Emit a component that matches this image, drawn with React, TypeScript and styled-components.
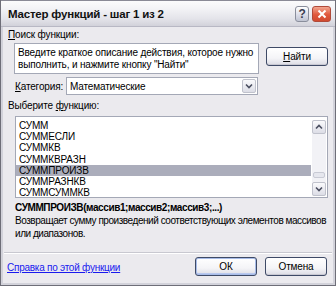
import React from "react";
import styled, { createGlobalStyle } from "styled-components";

const Global = createGlobalStyle`
  html, body { margin: 0; padding: 0; background: #ffffff; }
  * { box-sizing: border-box; }
`;

const FONT = `"Liberation Sans", Arial, sans-serif`;

const Window = styled.div`
  width: 336px;
  height: 286px;
  display: flex;
  flex-direction: column;
  background: #ebeaee;
  border: 1px solid #6e6e78;
  border-top: none;
  font-family: ${FONT};
  font-size: 10px;
  letter-spacing: -0.15px;
  color: #000;
  overflow: hidden;
`;

const TitleBar = styled.div`
  height: 27px;
  flex: none;
  display: flex;
  align-items: center;
  padding: 0 4px 0 7px;
  background: linear-gradient(#fbfbfc 0%, #f3f3f6 30%, #e4e4ea 70%, #d2d2da 100%);
  border-top: 1px solid #8a8a96;
  border-bottom: 1px solid #b8b8c4;
`;

const Title = styled.div`
  flex: 1;
  font-weight: bold;
  font-size: 11.5px;
  letter-spacing: -0.2px;
  color: #111;
`;

const CaptionButton = styled.div<{ $close?: boolean }>`
  width: ${(p) => (p.$close ? 19 : 14)}px;
  height: 16px;
  margin-left: ${(p) => (p.$close ? 3 : 0)}px;
  border-radius: 3px;
  border: 1px solid ${(p) => (p.$close ? "#b04a3a" : "#8a8e9c")};
  background: ${(p) =>
    p.$close
      ? "linear-gradient(#f2a690, #e0583c 55%, #d04a30)"
      : "linear-gradient(#ffffff, #d8dae6 60%, #c0c4d2)"};
  display: flex;
  align-items: center;
  justify-content: center;
  color: #3a3e52;
  font-weight: bold;
  font-size: 12px;
`;

const Body = styled.div`
  flex: 1;
  display: flex;
  flex-direction: column;
  padding: 0 3px 0 5px;
  border-left: 2px solid #d2d2da;
  border-right: 2px solid #d2d2da;
  border-bottom: 2px solid #d2d2da;
`;

const Label = styled.div`
  height: 13px;
  line-height: 13px;
  white-space: nowrap;
`;

const U = styled.span`
  text-decoration: underline;
`;

const SearchRow = styled.div`
  display: flex;
  align-items: flex-start;
  margin-top: 2px;
  padding-left: 6px;
`;

const SearchBox = styled.div`
  width: 245px;
  height: 31px;
  background: #fff;
  border: 1px solid #a4a8b6;
  padding: 3px 0 0 3px;
  line-height: 11.5px;
  white-space: nowrap;
  overflow: hidden;
`;

const Button = styled.div<{ $default?: boolean }>`
  width: 62px;
  height: 19px;
  border: 1px solid #3e4a66;
  border-radius: 3px;
  background: linear-gradient(#ffffff, #f4f4f7 60%, #dcdce4);
  box-shadow: ${(p) =>
    p.$default
      ? "inset 0 0 0 1px #a8bce8, inset 0 -1px 0 1px #b8c8ee"
      : "inset 0 -1px 0 #c8c8d2"};
  display: flex;
  align-items: center;
  justify-content: center;
`;

const SearchButtonWrap = styled.div`
  margin-left: 7px;
  margin-top: 4px;
`;

const CategoryRow = styled.div`
  display: flex;
  align-items: center;
  margin-top: 3px;
  padding-left: 7px;
`;

const CategoryLabel = styled.div`
  width: 51px;
  white-space: nowrap;
`;

const Select = styled.div`
  width: 192px;
  height: 18px;
  background: #fff;
  border: 1px solid #a4a8b6;
  display: flex;
  align-items: center;
  padding-left: 3px;
`;

const SelectText = styled.div`
  flex: 1;
`;

const ArrowBtn = styled.div`
  width: 14px;
  height: 14px;
  margin-right: 1px;
  border: 1px solid #c0c2cc;
  border-radius: 2px;
  background: linear-gradient(#fafafc, #dcdde6);
  display: flex;
  align-items: center;
  justify-content: center;
`;

const ListBox = styled.div`
  margin: 4px 2px 0 7px;
  height: 82px;
  flex: none;
  background: #fff;
  border: 1px solid #a4a8b6;
  display: flex;
`;

const Items = styled.div`
  flex: 1;
  display: flex;
  flex-direction: column;
  padding-top: 3px;
  overflow: hidden;
`;

const Item = styled.div<{ $selected?: boolean }>`
  flex: none;
  height: 11.2px;
  line-height: 11.2px;
  padding-left: 3px;
  margin-right: 1px;
  background: ${(p) => (p.$selected ? "#abadbb" : "transparent")};
  white-space: nowrap;
`;

const ScrollBar = styled.div`
  width: 14px;
  margin: 3px 1px 1px 0;
  display: flex;
  flex-direction: column;
  background: #f2f2f6;
`;

const ScrollBtn = styled.div`
  width: 14px;
  height: 14px;
  flex: none;
  border: 1px solid #c0c2cc;
  border-radius: 2px;
  background: linear-gradient(#fafafc, #dcdde6);
  display: flex;
  align-items: center;
  justify-content: center;
`;

const Track = styled.div`
  flex: 1;
  display: flex;
  flex-direction: column;
  justify-content: flex-end;
  padding-bottom: 4px;
`;

const Thumb = styled.div`
  height: 6px;
  margin: 0 1px;
  border: 1px solid #c8cad4;
  border-radius: 2px;
  background: #e6e7ee;
`;

const Signature = styled.div`
  margin: 3px 0 0 7px;
  font-weight: bold;
  font-size: 10px;
  letter-spacing: -0.4px;
  line-height: 13px;
  white-space: nowrap;
`;

const Description = styled.div`
  margin: 0 0 0 7px;
  line-height: 13px;
  letter-spacing: -0.45px;
  white-space: nowrap;
`;

const Separator = styled.div`
  margin: 12px -2px 0 -4px;
  height: 2px;
  flex: none;
  border-top: 1px solid #c8c8d0;
  border-bottom: 1px solid #ffffff;
`;

const Footer = styled.div`
  display: flex;
  align-items: center;
  margin-top: 3px;
`;

const Link = styled.a`
  flex: 1;
  color: #1a1aee;
  text-decoration: underline;
  margin-top: 1px;
  margin-left: -1px;
  letter-spacing: -0.25px;
  white-space: nowrap;
`;

const FooterButtons = styled.div`
  display: flex;
  gap: 8px;
  margin-right: 3px;
`;

const Chevron = ({ up }: { up?: boolean }) => (
  <svg width="8" height="6" viewBox="0 0 8 6">
    <path
      d={up ? "M1 4.5 L4 1.5 L7 4.5" : "M1 1.5 L4 4.5 L7 1.5"}
      fill="none"
      stroke="#4a4e60"
      strokeWidth="1.6"
    />
  </svg>
);

const functions = [
  "СУММ",
  "СУММЕСЛИ",
  "СУММКВ",
  "СУММКВРАЗН",
  "СУММПРОИЗВ",
  "СУММРАЗНКВ",
  "СУММСУММКВ",
];

export default function App() {
  return (
    <>
      <Global />
      <Window>
        <TitleBar>
          <Title>Мастер функций - шаг 1 из 2</Title>
          <CaptionButton>?</CaptionButton>
          <CaptionButton $close>
            <svg width="10" height="10" viewBox="0 0 10 10">
              <path d="M1.5 1.5 L8.5 8.5 M8.5 1.5 L1.5 8.5" stroke="#fff" strokeWidth="2" />
            </svg>
          </CaptionButton>
        </TitleBar>
        <Body>
          <Label style={{ marginTop: 1 }}>
            <U>П</U>оиск функции:
          </Label>
          <SearchRow>
            <SearchBox>
              Введите краткое описание действия, которое нужно
              <br />
              выполнить, и нажмите кнопку "Найти"
            </SearchBox>
            <SearchButtonWrap>
              <Button>
                <U>Н</U>айти
              </Button>
            </SearchButtonWrap>
          </SearchRow>
          <CategoryRow>
            <CategoryLabel>
              <U>К</U>атегория:
            </CategoryLabel>
            <Select>
              <SelectText>Математические</SelectText>
              <ArrowBtn>
                <Chevron />
              </ArrowBtn>
            </Select>
          </CategoryRow>
          <Label style={{ marginTop: 4 }}>
            Выберите <U>ф</U>ункцию:
          </Label>
          <ListBox>
            <Items>
              {functions.map((f) => (
                <Item key={f} $selected={f === "СУММПРОИЗВ"}>
                  {f}
                </Item>
              ))}
            </Items>
            <ScrollBar>
              <ScrollBtn>
                <Chevron up />
              </ScrollBtn>
              <Track>
                <Thumb />
              </Track>
              <ScrollBtn>
                <Chevron />
              </ScrollBtn>
            </ScrollBar>
          </ListBox>
          <Signature>СУММПРОИЗВ(массив1;массив2;массив3;...)</Signature>
          <Description>
            Возвращает сумму произведений соответствующих элементов массивов
            <br />
            или диапазонов.
          </Description>
          <Separator />
          <Footer>
            <Link href="#">Справка по этой функции</Link>
            <FooterButtons>
              <Button $default>ОК</Button>
              <Button>Отмена</Button>
            </FooterButtons>
          </Footer>
        </Body>
      </Window>
    </>
  );
}
